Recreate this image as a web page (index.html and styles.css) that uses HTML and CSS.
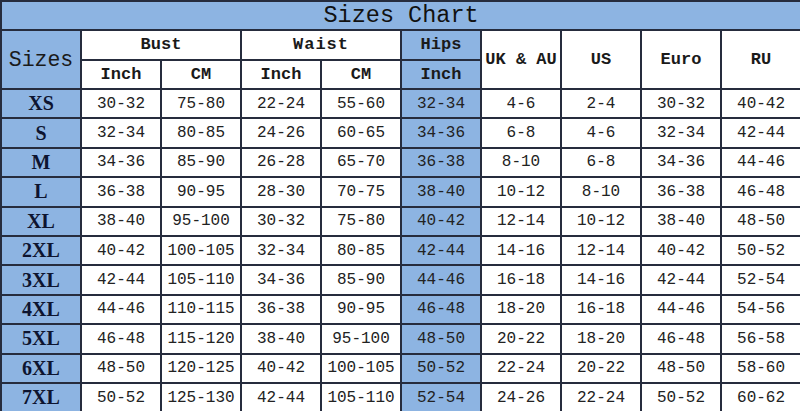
FILE: index.html
```html
<!DOCTYPE html>
<html lang="en">
<head>
  <meta charset="UTF-8">
  <meta name="viewport" content="width=device-width, initial-scale=1.0">
  <title>Sizes Chart</title>
  <link rel="stylesheet" href="styles.css">
</head>
<body>
  <table class="chart">
    <colgroup>
      <col><col><col><col><col><col><col><col><col><col>
    </colgroup>
    <tr class="title-row">
      <th colspan="10" class="title">Sizes Chart</th>
    </tr>
    <tr class="head-row">
      <th rowspan="2" class="blue sizes-head">Sizes</th>
      <th colspan="2">Bust</th>
      <th colspan="2" class="wide">Waist</th>
      <th class="blue">Hips</th>
      <th rowspan="2">UK &amp; AU</th>
      <th rowspan="2">US</th>
      <th rowspan="2">Euro</th>
      <th rowspan="2">RU</th>
    </tr>
    <tr class="head-row">
      <th>Inch</th>
      <th>CM</th>
      <th>Inch</th>
      <th>CM</th>
      <th class="blue">Inch</th>
    </tr>
    <tr><th class="size">XS</th><td>30-32</td><td>75-80</td><td>22-24</td><td>55-60</td><td class="blue">32-34</td><td>4-6</td><td>2-4</td><td>30-32</td><td>40-42</td></tr>
    <tr><th class="size">S</th><td>32-34</td><td>80-85</td><td>24-26</td><td>60-65</td><td class="blue">34-36</td><td>6-8</td><td>4-6</td><td>32-34</td><td>42-44</td></tr>
    <tr><th class="size">M</th><td>34-36</td><td>85-90</td><td>26-28</td><td>65-70</td><td class="blue">36-38</td><td>8-10</td><td>6-8</td><td>34-36</td><td>44-46</td></tr>
    <tr><th class="size">L</th><td>36-38</td><td>90-95</td><td>28-30</td><td>70-75</td><td class="blue">38-40</td><td>10-12</td><td>8-10</td><td>36-38</td><td>46-48</td></tr>
    <tr><th class="size">XL</th><td>38-40</td><td>95-100</td><td>30-32</td><td>75-80</td><td class="blue">40-42</td><td>12-14</td><td>10-12</td><td>38-40</td><td>48-50</td></tr>
    <tr><th class="size">2XL</th><td>40-42</td><td>100-105</td><td>32-34</td><td>80-85</td><td class="blue">42-44</td><td>14-16</td><td>12-14</td><td>40-42</td><td>50-52</td></tr>
    <tr><th class="size">3XL</th><td>42-44</td><td>105-110</td><td>34-36</td><td>85-90</td><td class="blue">44-46</td><td>16-18</td><td>14-16</td><td>42-44</td><td>52-54</td></tr>
    <tr><th class="size">4XL</th><td>44-46</td><td>110-115</td><td>36-38</td><td>90-95</td><td class="blue">46-48</td><td>18-20</td><td>16-18</td><td>44-46</td><td>54-56</td></tr>
    <tr><th class="size">5XL</th><td>46-48</td><td>115-120</td><td>38-40</td><td>95-100</td><td class="blue">48-50</td><td>20-22</td><td>18-20</td><td>46-48</td><td>56-58</td></tr>
    <tr><th class="size">6XL</th><td>48-50</td><td>120-125</td><td>40-42</td><td>100-105</td><td class="blue">50-52</td><td>22-24</td><td>20-22</td><td>48-50</td><td>58-60</td></tr>
    <tr><th class="size">7XL</th><td>50-52</td><td>125-130</td><td>42-44</td><td>105-110</td><td class="blue">52-54</td><td>24-26</td><td>22-24</td><td>50-52</td><td>60-62</td></tr>
  </table>
</body>
</html>
```

FILE: styles.css
```css
body {
  margin: 0;
  background: #fff;
  font-family: "Liberation Mono", monospace;
  color: #222;
}
.chart {
  width: 800px;
  border-collapse: collapse;
  table-layout: fixed;
}
.chart col {
  width: 80px;
}
.chart th,
.chart td {
  border: 2px solid #262c3d;
  padding: 0;
  text-align: center;
  vertical-align: middle;
  background: #fff;
  height: 27px;
  font-size: 16px;
  overflow: hidden;
  white-space: nowrap;
}
.chart th {
  font-weight: bold;
  font-size: 17px;
  color: #1a1a1a;
}
.chart .blue {
  background: #8db4e2;
}
.chart .title {
  background: #8db4e2;
  font-weight: normal;
  font-size: 23.5px;
  color: #111;
  height: 27px;
  line-height: 27px;
}
.head-row th {
  height: 27.5px;
}
.chart .sizes-head {
  font-weight: normal;
  font-size: 21.5px;
  color: #1a1a1a;
}
.wide {
  letter-spacing: 1px;
}
.chart .size {
  background: #8db4e2;
  font-family: "Liberation Serif", serif;
  font-size: 20px;
  color: #0d1430;
}
.chart td {
  height: 27.4px;
}
```
